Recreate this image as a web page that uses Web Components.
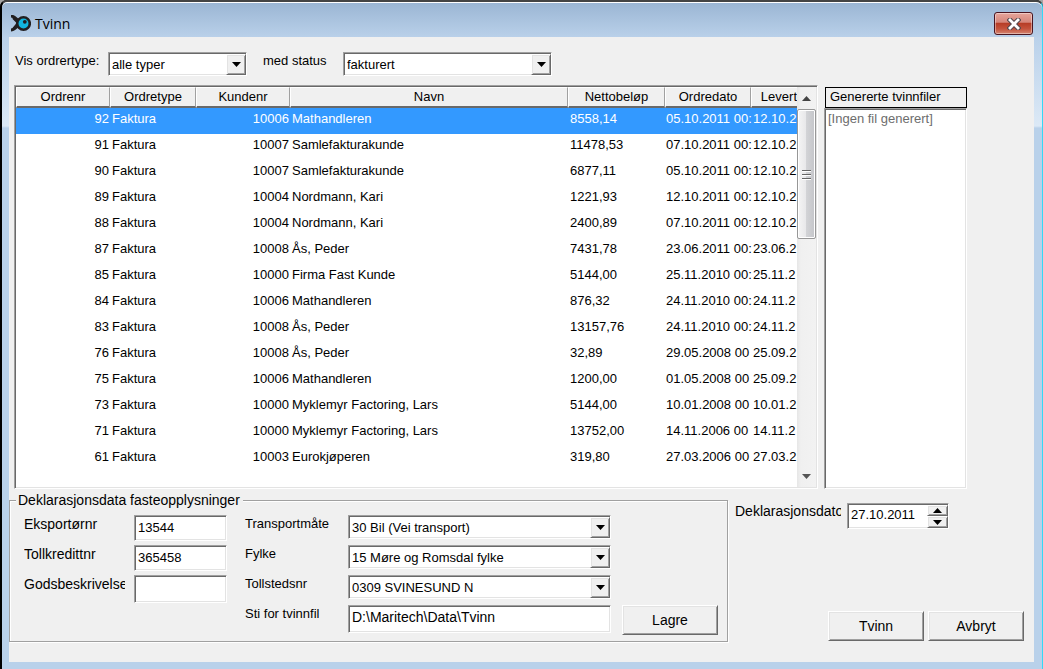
<!DOCTYPE html>
<html lang="no">
<head>
<meta charset="utf-8">
<title>Tvinn</title>
<style>
  html, body { margin: 0; height: 100%; }
  body {
    font: 13px/16px "Liberation Sans", Arial, sans-serif;
    color: #000;
    background: #000;
    --face: #f0f0f0;
    --shade: #a0a0a0;
    --dark: #696969;
    --light: #e3e3e3;
  }
</style>
</head>
<body>
<tv-window caption="Tvinn">
  <tv-filter slot="filter"></tv-filter>
  <tv-orders slot="main"></tv-orders>
  <tv-files slot="main" heading="Genererte tvinnfiler">[Ingen fil generert]</tv-files>
  <tv-declaration slot="footer"></tv-declaration>
  <tv-actions slot="footer"></tv-actions>
</tv-window>

<script>
const BASE = `
  *, *::before, *::after { box-sizing: border-box; }
  input, select, button { font: inherit; color: inherit; margin: 0; border-radius: 0; outline: 0; }
  .sunken {
    background: #fff;
    border: 1px solid;
    border-color: var(--shade) #fff #fff var(--shade);
    box-shadow: inset 1px 1px var(--dark), inset -1px -1px var(--light);
  }
  .raised {
    background: var(--face);
    border: 1px solid;
    border-color: #fff var(--dark) var(--dark) #fff;
    box-shadow: inset 1px 1px var(--light), inset -1px -1px var(--shade);
  }
`;

function define(name, css, markup) {
  customElements.define(name, class extends HTMLElement {
    constructor() {
      super();
      this.attachShadow({ mode: "open" });
    }
    connectedCallback() {
      const body = typeof markup === "function" ? markup(this) : markup;
      this.shadowRoot.innerHTML = `<style>${BASE}${css}</style>${body}`;
    }
  });
}

/* Window frame with title bar */
define("tv-window", `
  :host {
    display: flex; flex-direction: column; box-sizing: border-box; min-height: 100vh;
    padding: 0 8px 7px 7px;
    border: solid; border-width: 2px 1px 0 2px;
    border-color: #444 #35d8f5 #000 #000;
    border-radius: 7px 7px 0 0;
    background: linear-gradient(#9ab5d3 0, #bad1ea 36px, #dce9f6 124px, #b9d1ea 126px);
    box-shadow: inset 0 1px #fff, 0 0 0 8px #a5a5a5;
  }
  header { display: flex; align-items: center; height: 35px; padding: 8px 1px 0 2px; gap: 4px;
    font: 14px/20px "Open Sans", sans-serif; }
  h1 { font: inherit; margin: 0; flex: 1; }
  .close { width: 39px; height: 23px; padding: 0; border: 1px solid #4a1520; border-radius: 3px;
    background: linear-gradient(#e7a59b 0, #d5857a 45%, #b53a24 46%, #c4523c 75%, #d58572 100%);
    box-shadow: inset 0 0 0 1px #ffffff66; display: grid; place-items: center; }
  .client { flex: 1; display: flex; flex-direction: column; background: var(--face);
    padding: 15px 0 20px; }
  .main { flex: 1; display: flex; gap: 6px; padding: 10px 67px 3px 5px; min-height: 300px; }
  .footer { display: flex; }
`, el => `
  <header>
    <svg width="20" height="18" viewBox="0 0 20 18" aria-hidden="true">
      <path d="M0 1 C3 1 5 4 8 6 M0 15 C3 15 5 12 8 10" fill="none" stroke="#221f20" stroke-width="3"/>
      <path d="M2 3 L7 8 L2 14" fill="none" stroke="#221f20" stroke-width="2"/>
      <circle cx="12.500" cy="8.500" r="6.300" fill="#12b5de" stroke="#221f20" stroke-width="2.600"/>
      <circle cx="13.800" cy="6.800" r="1.900" fill="#221f20"/>
    </svg>
    <h1>${el.getAttribute("caption")}</h1>
    <button class="close" type="button" aria-label="Lukk">
      <svg width="14" height="12" viewBox="0 0 14 12">
        <path d="M3 2 L11 10 M11 2 L3 10" stroke="#54474c" stroke-width="4.800" stroke-linecap="square"/>
        <path d="M3 2 L11 10 M11 2 L3 10" stroke="#fff" stroke-width="2.800" stroke-linecap="square"/>
      </svg>
    </button>
  </header>
  <div class="client">
    <slot name="filter"></slot>
    <div class="main"><slot name="main"></slot></div>
    <div class="footer"><slot name="footer"></slot></div>
  </div>
`);

/* Labelled drop-down; label and box take part in the parent's layout */
define("tv-combo", `
  :host { display: contents; }
  label { white-space: nowrap; padding-top: 1px; }
  .box { display: grid; grid-template-columns: 1fr 20px; height: 24px; }
  select { grid-area: 1 / 1 / 2 / 3; appearance: none; border: 0; background: none;
    padding: 2px 20px 0 3px; width: 100%; min-width: 0; }
  .arrow { grid-area: 1 / 2; margin-top: 1px; pointer-events: none; display: grid; place-items: center; }
`, el => `
  <label for="s">${el.getAttribute("label")}</label>
  <div class="box sunken">
    <select id="s"><option>${el.getAttribute("value")}</option></select>
    <span class="arrow raised"><svg width="9" height="5" viewBox="0 0 9 5"><path d="M0 0H9L4.500 5Z"/></svg></span>
  </div>
`);

define("tv-text", `
  :host { display: contents; }
  label { white-space: nowrap; overflow: hidden; padding-top: 1px; font-size: var(--label, 13px); }
  input { width: 100%; height: var(--tall, 26px); padding: 0 3px var(--below, 2px); font-size: var(--value, 13px); }
`, el => `
  <label for="t">${el.getAttribute("label")}</label>
  <input id="t" class="sunken" type="text" value="${el.getAttribute("value") || ""}">
`);

define("tv-button", `
  :host { display: block; width: 96px; }
  button { display: block; width: 100%; height: 30px; padding: 0; font-size: 14px; }
`, `<button type="button" class="raised"><slot></slot></button>`);

define("tv-filter", `
  :host { display: grid; grid-template-columns: 87px 139px 84px 209px; column-gap: 6px;
    align-items: start; height: 23px; padding-left: 6px; }
  .second { display: grid; grid-column: 3 / 5; grid-template-columns: subgrid; padding-left: 10px; }
`, `
  <tv-combo label="Vis ordrertype:" value="alle typer"></tv-combo>
  <div class="second"><tv-combo label="med status" value="fakturert"></tv-combo></div>
`);

const ORDERS = [
  ["92", "10006", "Mathandleren", "8558,14", "05.10.2011 00:", "12.10.2"],
  ["91", "10007", "Samlefakturakunde", "11478,53", "07.10.2011 00:", "12.10.2"],
  ["90", "10007", "Samlefakturakunde", "6877,11", "05.10.2011 00:", "12.10.2"],
  ["89", "10004", "Nordmann, Kari", "1221,93", "12.10.2011 00:", "12.10.2"],
  ["88", "10004", "Nordmann, Kari", "2400,89", "07.10.2011 00:", "12.10.2"],
  ["87", "10008", "Ås, Peder", "7431,78", "23.06.2011 00:", "23.06.2"],
  ["85", "10000", "Firma Fast Kunde", "5144,00", "25.11.2010 00:", "25.11.2"],
  ["84", "10006", "Mathandleren", "876,32", "24.11.2010 00:", "24.11.2"],
  ["83", "10008", "Ås, Peder", "13157,76", "24.11.2010 00:", "24.11.2"],
  ["76", "10008", "Ås, Peder", "32,89", "29.05.2008 00", "25.09.2"],
  ["75", "10006", "Mathandleren", "1200,00", "01.05.2008 00", "25.09.2"],
  ["73", "10000", "Myklemyr Factoring, Lars", "5144,00", "10.01.2008 00", "10.01.2"],
  ["71", "10000", "Myklemyr Factoring, Lars", "13752,00", "14.11.2006 00", "14.11.2"],
  ["61", "10003", "Eurokjøperen", "319,80", "27.03.2006 00", "27.03.2"],
];

define("tv-orders", `
  :host { display: flex; flex: 1; min-width: 0; }
  .frame { flex: 1; display: flex; min-width: 0; padding: 1px; }
  .view { flex: 1; min-width: 0; overflow: hidden; }
  table { width: 100%; table-layout: fixed; border-collapse: separate; border-spacing: 0; }
  th { height: 21px; padding: 0; font-weight: 400; background: var(--face);
    border: solid; border-width: 1px 1px 2px 1px; border-color: #fff var(--shade) var(--dark) #fff; }
  th:last-child { border-right: 0; text-align: right; }
  td { height: 26px; padding: 0 1px 0 2px; line-height: 21px; vertical-align: top; white-space: nowrap; }
  td:nth-child(6) { padding: 0 0 0 1px; }
  td:last-child { padding-right: 0; }
  .n { text-align: right; }
  .on { background: #3399ff; color: #fff; }
  .bar { width: 19px; display: flex; flex-direction: column; background: linear-gradient(90deg, #e6e6e6, #f0f0f0 20%, #f2f2f2); }
  .bar > span { height: 22px; display: grid; place-items: center; }
  .thumb { height: 130px; border: 1px solid #979797; border-radius: 2px;
    box-shadow: inset 0 0 0 1px #fff;
    background: linear-gradient(90deg, #f5f5f5 0, #e8e8ea 45%, #d2d3d6 50%, #c4c5c9 100%);
    display: grid; place-items: center; }
  .grow { flex: 1; }
`, `
  <div class="frame sunken">
    <div class="view">
      <table>
        <colgroup><col style="width:94px"><col style="width:86px"><col style="width:94px"><col><col style="width:97px"><col style="width:86px"><col style="width:46px"></colgroup>
        <thead><tr><th>Ordrenr</th><th>Ordretype</th><th>Kundenr</th><th>Navn</th><th>Nettobeløp</th><th>Ordredato</th><th>Levert</th></tr></thead>
        <tbody>${ORDERS.map((o, i) => `<tr${i ? "" : ' class="on"'}><td class="n">${o[0]}</td><td>Faktura</td><td class="n">${o[1]}</td><td>${o[2]}</td><td>${o[3]}</td><td>${o[4]}</td><td>${o[5]}</td></tr>`).join("")}</tbody>
      </table>
    </div>
    <div class="bar" aria-hidden="true">
      <span><svg width="9" height="5" viewBox="0 0 9 5"><path d="M0 5H9L4.500 0Z" fill="#444"/></svg></span>
      <div class="thumb"><svg width="9" height="11" viewBox="0 0 9 11"><path d="M0 1.500H9M0 5.500H9M0 9.500H9" stroke="#666"/><path d="M0 2.500H9M0 6.500H9M0 10.500H9" stroke="#fff"/></svg></div>
      <div class="grow"></div>
      <span><svg width="9" height="5" viewBox="0 0 9 5"><path d="M0 0H9L4.500 5Z" fill="#555"/></svg></span>
    </div>
  </div>
`);

define("tv-files", `
  :host { display: flex; flex-direction: column; width: 143px; padding-top: 2px; }
  h2 { margin: 0 0 0 1px; height: 21px; border: 1px solid #000; padding: 1px 0 0 4px; font: inherit; }
  .list { flex: 1; padding: 2px 3px; color: #6d6d6d; }
`, el => `
  <h2>${el.getAttribute("heading")}</h2>
  <div class="list sunken"><slot></slot></div>
`);

define("tv-declaration", `
  :host { display: block; flex: 1; min-width: 0; }
  fieldset { margin: 0; padding: 7px 9px 6px 14px; min-width: 0; border: 1px solid var(--shade);
    box-shadow: 1px 1px #fff, inset 1px 1px #fff; }
  legend { margin-left: -8px; padding: 0 3px 0 2px; font-size: 14px; line-height: 16px; background: var(--face); }
  .grid { display: grid; grid-template-columns: 101px 93px 103px 1fr 96px;
    grid-template-rows: repeat(4, 30px); column-gap: 9px; align-items: start; }
  .left, .right { display: grid; grid-template-columns: subgrid; grid-template-rows: subgrid; align-items: start; }
  .left { grid-area: 1 / 1 / 5 / 3; --label: 14px; }
  .right { grid-area: 1 / 3 / 5 / 5; padding: 0 2px 0 9px; }
  .save { grid-area: 4 / 5; }
`, `
  <fieldset>
    <legend>Deklarasjonsdata fasteopplysninger</legend>
    <div class="grid">
      <div class="left">
        <tv-text label="Eksportørnr" value="13544"></tv-text>
        <tv-text label="Tollkredittnr" value="365458"></tv-text>
        <tv-text label="Godsbeskrivelse" style="--tall: 28px"></tv-text>
      </div>
      <div class="right">
        <tv-combo label="Transportmåte" value="30 Bil (Vei transport)"></tv-combo>
        <tv-combo label="Fylke" value="15 Møre og Romsdal fylke"></tv-combo>
        <tv-combo label="Tollstedsnr" value="0309 SVINESUND N"></tv-combo>
        <tv-text label="Sti for tvinnfil" value="D:\\Maritech\\Data\\Tvinn" style="--tall: 28px; --value: 14px; --below: 5px"></tv-text>
      </div>
      <tv-button class="save">Lagre</tv-button>
    </div>
  </fieldset>
`);

define("tv-actions", `
  :host { display: flex; flex-direction: column; justify-content: space-between; width: 306px;
    box-sizing: border-box; padding: 11px 10px 1px 7px; }
  .date { display: flex; gap: 6px; }
  label { width: 106px; overflow: hidden; white-space: nowrap; font-size: 14px; }
  .spin { display: grid; grid-template: 12px 12px / 1fr 21px; width: 102px; height: 26px; }
  input { grid-area: 1 / 1 / 3 / 2; min-width: 0; width: 100%; border: 0; background: none; padding: 0 0 3px 3px; }
  .spin button { padding: 0; display: grid; place-items: center; }
  .spin button:first-of-type { margin-top: 1px; }
  .buttons { display: flex; justify-content: flex-end; gap: 4px; }
`, `
  <div class="date">
    <label for="d">Deklarasjonsdato</label>
    <div class="spin sunken">
      <input id="d" type="text" value="27.10.2011">
      <button type="button" class="raised" aria-label="Opp"><svg width="9" height="5" viewBox="0 0 9 5"><path d="M0 5H9L4.500 0Z"/></svg></button>
      <button type="button" class="raised" aria-label="Ned"><svg width="9" height="5" viewBox="0 0 9 5"><path d="M0 0H9L4.500 5Z"/></svg></button>
    </div>
  </div>
  <div class="buttons"><tv-button>Tvinn</tv-button><tv-button>Avbryt</tv-button></div>
`);
</script>
</body>
</html>
